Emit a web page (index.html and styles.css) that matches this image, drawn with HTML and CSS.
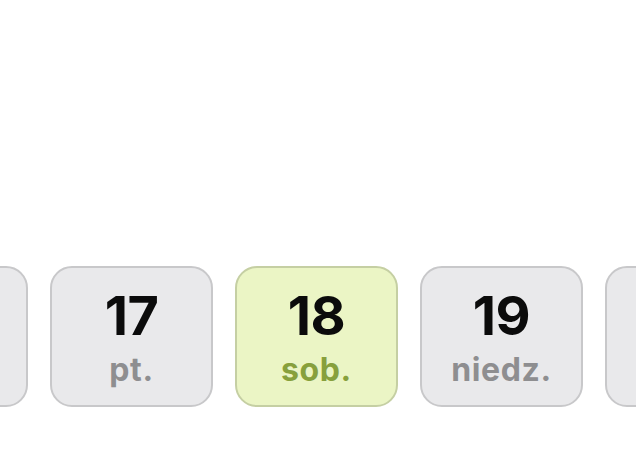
FILE: index.html
```html
<!DOCTYPE html>
<html lang="pl">
<head>
  <meta charset="UTF-8" />
  <title>Wybór dnia</title>
  <link rel="stylesheet" href="styles.css">
</head>
<body>

  <div class="days">
    <!-- edge cards are only peeking in, their labels sit outside the view -->
    <div class="day"></div>
    <div class="day">
      <div class="num">17</div>
      <div class="name">pt.</div>
    </div>
    <div class="day selected">
      <div class="num">18</div>
      <div class="name">sob.</div>
    </div>
    <div class="day">
      <div class="num">19</div>
      <div class="name">niedz.</div>
    </div>
    <div class="day"></div>
  </div>

</body>
</html>
```

FILE: styles.css
```css
html, body {
  margin: 0;
  background: #fff;
  overflow: hidden;
}

body {
  width: 636px;
  height: 468px;
  font-family: Inter, 'Liberation Sans', sans-serif;
}

.days {
  display: flex;
  justify-content: center;
  gap: 22px;
  padding-top: 266px;
  margin-left: -3px;
}

.day {
  flex: 0 0 163px;
  height: 141px;
  box-sizing: border-box;
  padding-top: 21px;
  background: #e9e9eb;
  border: 2px solid #c8c8ca;
  border-radius: 22px;
  text-align: center;
}

.num {
  font-size: 54px;
  line-height: 54px;
  font-weight: 700;
  color: #0b0b0b;
  letter-spacing: -0.5px;
}

.name {
  margin-top: 11px;
  font-size: 32px;
  line-height: 32px;
  font-weight: 700;
  color: #8e8e90;
  letter-spacing: 0.6px;
}

.day.selected {
  background: #ebf5c5;
  border-color: #c5cfa3;
}

.day.selected .name {
  color: #87a03c;
}
```
